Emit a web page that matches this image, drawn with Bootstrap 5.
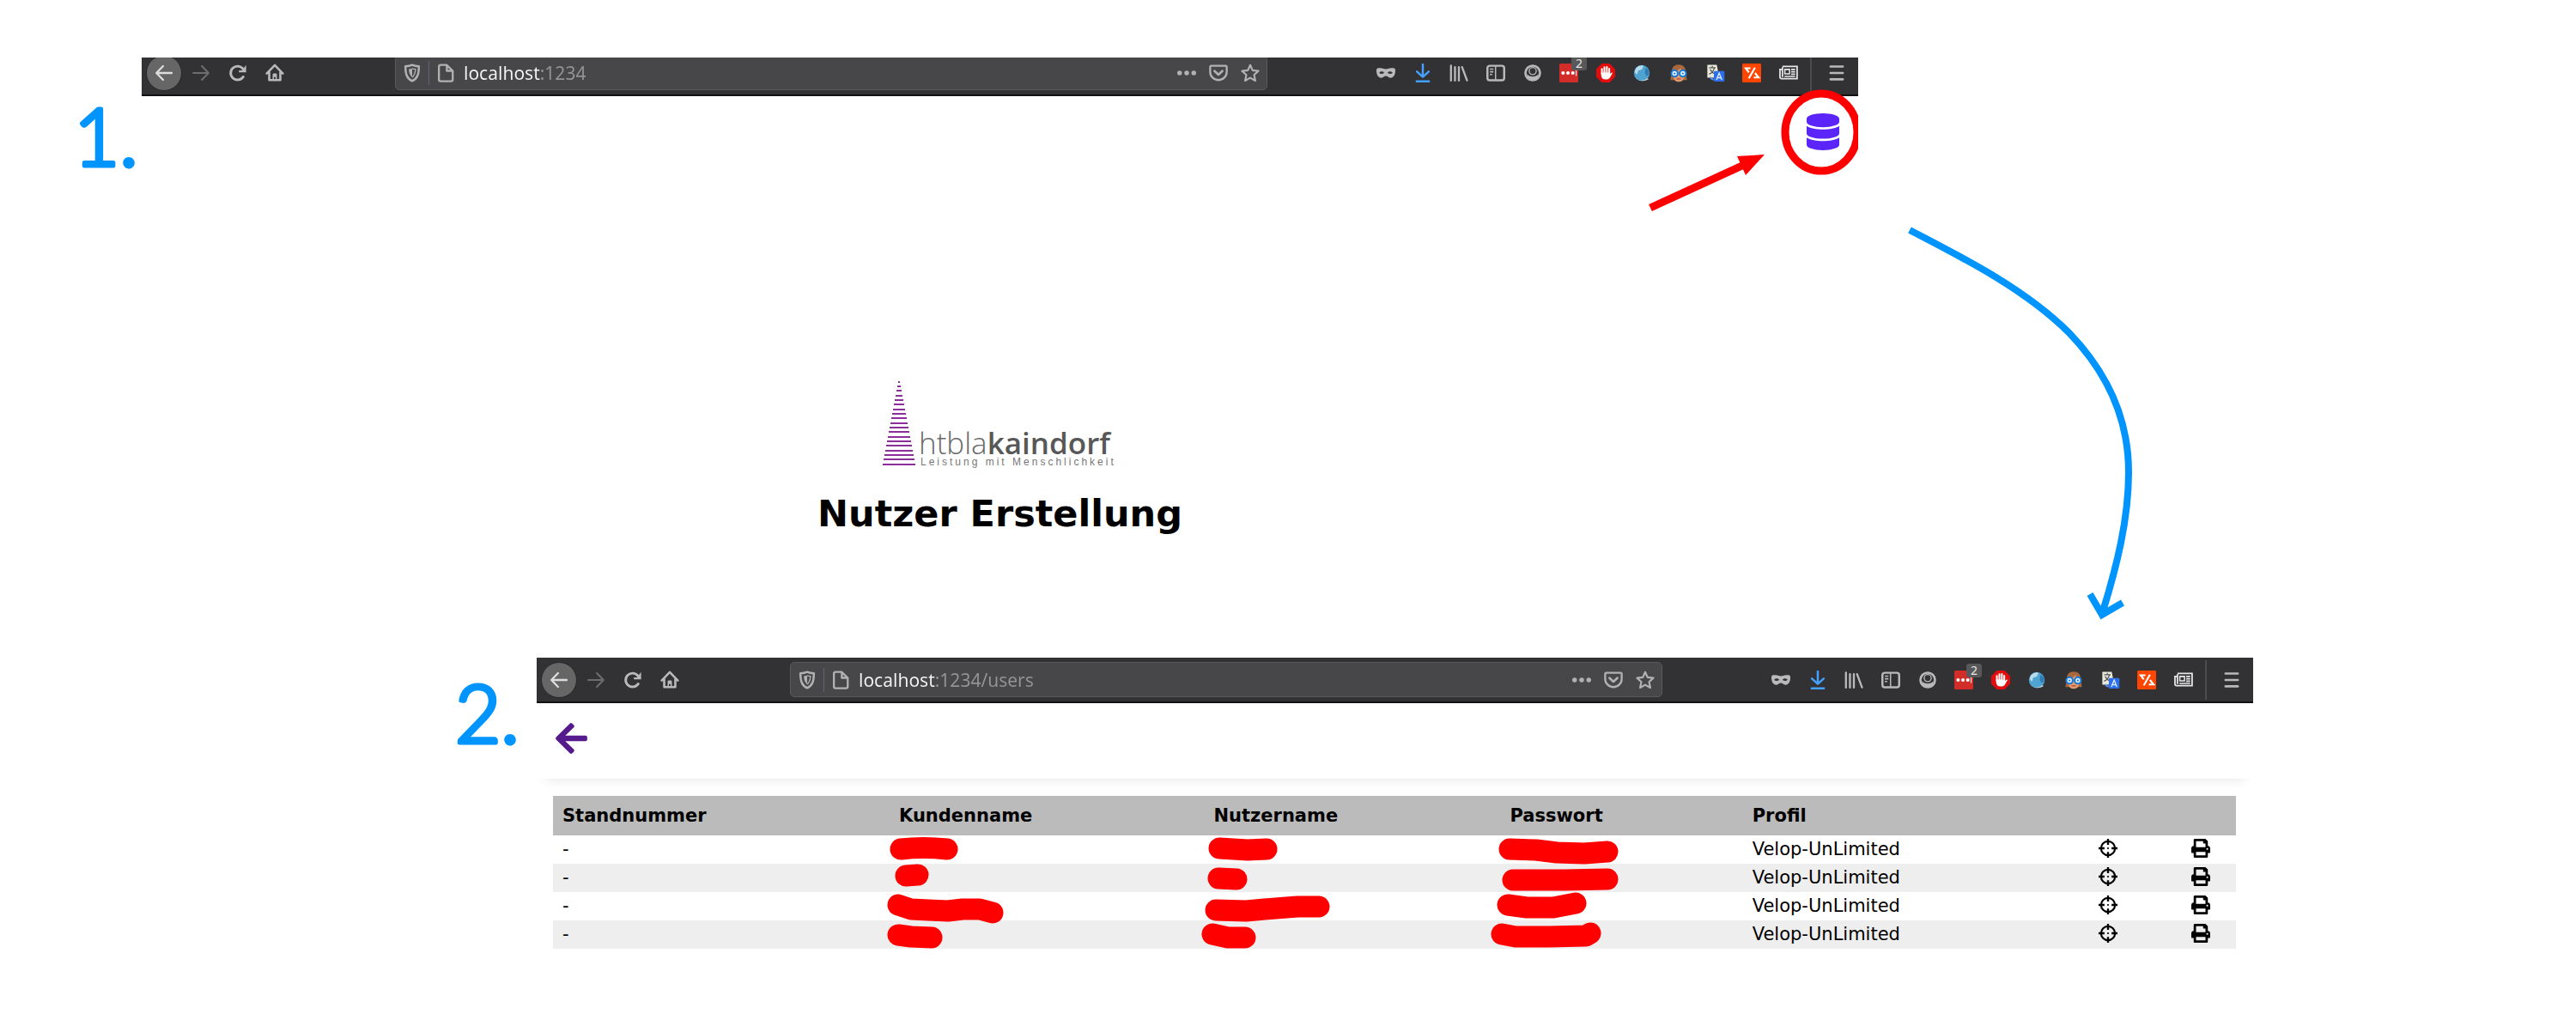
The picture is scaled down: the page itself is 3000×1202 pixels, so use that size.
<!DOCTYPE html>
<html lang="de">
<head>
<meta charset="utf-8">
<meta name="viewport" content="width=device-width, initial-scale=1">
<title>Nutzer Erstellung</title>
<link href="https://cdn.jsdelivr.net/npm/bootstrap@5.3.0/dist/css/bootstrap.min.css" rel="stylesheet">
<style>
  body { background: #fff; color: #000; font-family: "DejaVu Sans", sans-serif; font-size: 21px; line-height: 25px; }
  svg { display: block; }
  .step-one { padding: 67px 836px 0 92px; }
  .step-two { padding: 143px 376px 0 528px; }
  .step-no { flex: 0 0 73px; }
  .step-two .step-no { flex-basis: 97px; }
  .step-no text { font-family: Lato, "DejaVu Sans", sans-serif; font-weight: 300; font-size: 92px; fill: #0094ff; stroke: #0094ff; stroke-width: 5px; stroke-linejoin: round; }
  .win { min-width: 0; }
  .win-cut .toolbar { margin-top: -8px; }
  .toolbar { height: 53px; background: #323234; border-bottom: 2px solid #111113; padding: 0 14px 0 5px; color: #b9b9ba; }
  .tool-btn { width: 42px; height: 42px; padding: 0; border: 0; background: none; color: inherit; display: flex; align-items: center; justify-content: center; border-radius: 50%; }
  .tool-btn.back-btn { background: #666; border: 1px solid #28282a; color: #dcdcdc; }
  .tool-btn.dim { color: #6d6d6f; }
  .nav-tools { gap: 1px; }
  .ico { width: 22px; height: 22px; }
  .urlbar { height: 41px; margin: 0 127px 0 119px; padding: 0 8px; background: #474749; border: 1px solid #59595c; border-radius: 5px; color: #b1b1b3; }
  .url-sep { width: 1px; height: 28px; background: #5f6670; margin: 0 8px; }
  .url-field { min-width: 0; margin-left: 10px; padding: 0; border: 0; outline: 0; font: 21px/30px "Noto Sans", sans-serif; color: transparent; background: linear-gradient(90deg, #f4f4f5 89px, #949496 89px); -webkit-background-clip: text; background-clip: text; }
  .url-tools { gap: 15px; }
  .ext-tools { width: 491px; flex: none; }
  .plain-btn { padding: 0; border: 0; background: none; color: inherit; position: relative; }
  .ext-count { position: absolute; left: 14px; top: -8px; width: 18px; height: 16px; background: #58585a; border-radius: 3px; color: #e8e8e8; font: 14px/16px "Noto Sans", sans-serif; }
  .bar-sep { width: 2px; height: 46px; background: #4c4c4e; margin: 0 18px 0 14px; }
  .page-top { padding: 20px 22px 0; }
  .ring { right: -7px; top: -9px; pointer-events: none; }
  .hint { right: 104px; top: 63px; }
  .hero { padding-top: 265px; }
  .hero h1 { font-size: 43px; line-height: 50px; font-weight: 700; margin: 28px 0 0; }
  .brand-name { font: 300 35px "Open Sans", sans-serif; fill: #6a6a6a; }
  .brand-name .strong { font-weight: 600; fill: #585858; }
  .brand-tag { font: 12px "Liberation Sans", sans-serif; letter-spacing: 3px; fill: #777; }
  .flow-arrow { left: 2200px; top: 255px; pointer-events: none; }
  .back-head { padding: 20px 22px 26px; box-shadow: 0 12px 12px -10px rgba(0,0,0,.09); }
  .list-wrap { padding: 20px 20px 0 19px; }
  .users { table-layout: fixed; width: 100%; }
  .users th { height: 46px; padding: 0 11px; background: #bbb; border: 0; font-weight: 700; vertical-align: middle; }
  .users td { height: 33px; padding: 0 11px; position: relative; vertical-align: middle; }
  .users tbody tr:nth-child(even) td { background: #eee; }
  .users td .plain-btn { display: block; color: #000; margin-bottom: 4px; }
  .redact { position: absolute; left: 0; top: 0; width: 140px; height: 33px; overflow: visible; z-index: 1; fill: none; stroke: #f00; stroke-width: 25px; stroke-linecap: round; stroke-linejoin: round; }
</style>
<script src="https://cdn.jsdelivr.net/npm/bootstrap@5.3.0/dist/js/bootstrap.bundle.min.js"></script>
</head>
<body class="position-relative">

<svg width="0" height="0" class="position-absolute" aria-hidden="true">
  <defs>
    <symbol id="i-back" viewBox="0 0 16 16"><path d="M14.5 8H2M7.2 2.2L1.6 8l5.6 5.8" fill="none" stroke="currentColor" stroke-width="1.7" stroke-linecap="round" stroke-linejoin="round"/></symbol>
    <symbol id="i-fwd" viewBox="0 0 16 16"><path d="M1.5 8H14M8.8 2.2L14.4 8l-5.6 5.8" fill="none" stroke="currentColor" stroke-width="1.5" stroke-linecap="round" stroke-linejoin="round"/></symbol>
    <symbol id="i-reload" viewBox="0 0 16 16"><path d="M12.6 11.2A5.8 5.8 0 1 1 12.4 4.6" fill="none" stroke="currentColor" stroke-width="2.1" stroke-linecap="round"/><path d="M15 1.3v6.2H8.9V5.8h2.6z" fill="currentColor"/></symbol>
    <symbol id="i-home" viewBox="0 0 16 16"><path d="M1.2 8.4L8 1.3l6.8 7.1M3.3 7.4V14h9.4V7.4" fill="none" stroke="currentColor" stroke-width="1.9" stroke-linecap="round" stroke-linejoin="round"/><path d="M6.2 14V9.2q0-.9.9-.9h1.8q.9 0 .9.9V14H8.7v-2.6H7.3V14z" fill="currentColor"/></symbol>
    <symbol id="i-shield" viewBox="0 0 16 16"><path d="M8 1.2C6 2 4.200 2.300 2.300 2.400c0 6 .900 10 5.700 12.400 4.800-2.400 5.700-6.400 5.700-12.400C11.800 2.300 10 2 8 1.200z" fill="none" stroke="currentColor" stroke-width="1.8" stroke-linejoin="round"/><path d="M8 4.200v7.500C6 10 5.300 7.800 5.200 4.800z" fill="currentColor"/><path d="M8 4.200c1 .4 1.800.5 2.800.6C10.700 7.800 10 10 8 11.700" fill="none" stroke="currentColor"/></symbol>
    <symbol id="i-doc" viewBox="0 0 16 16"><path d="M3.800 1.200h5L14 6.200v7.300q0 1.500-1.500 1.500H3.800q-1.500 0-1.500-1.500V2.700q0-1.500 1.500-1.500zM9 1.500v4.700h4.800" fill="none" stroke="currentColor" stroke-width="1.700" stroke-linejoin="round"/></symbol>
    <symbol id="i-dots" viewBox="0 0 16 16"><g fill="currentColor"><circle cx="2" cy="8" r="2"/><circle cx="8" cy="8" r="2"/><circle cx="14" cy="8" r="2"/></g></symbol>
    <symbol id="i-pocket" viewBox="0 0 16 16"><path d="M2 1.900h12q1 0 1 1V7a7 7 0 0 1-14 0V2.900q0-1 1-1z" fill="none" stroke="currentColor" stroke-width="1.700"/><path d="M4.700 6.300L8 9.400l3.300-3.100" fill="none" stroke="currentColor" stroke-width="2" stroke-linecap="round" stroke-linejoin="round"/></symbol>
    <symbol id="i-star" viewBox="0 0 16 16"><path d="M8 1.300l2 4.400 4.900.600-3.600 3.300 1 4.900L8 12.100l-4.300 2.400 1-4.900L1.100 6.300 6 5.700z" fill="none" stroke="currentColor" stroke-width="1.600" stroke-linejoin="round"/></symbol>
    <symbol id="i-mask" viewBox="0 0 16 16"><path fill="currentColor" fill-rule="evenodd" d="M0 5.200C.2 3.900 1.700 3.800 3.500 3.900 5.500 4 6.500 4.800 8 4.800s2.500-.8 4.500-.9c1.800-.1 3.300 0 3.500 1.300.200 3.800-1.200 6.900-4 6.900-1.900 0-2.600-1.600-4-1.600s-2.100 1.600-4 1.600c-2.800 0-4.200-3.100-4-6.900zM2.300 7.800C3 8.900 6 9 6.600 7.900 6 6.300 3.200 6.200 2.300 7.800zm7.100.1c.6 1.100 3.600 1 4.300-.1-.9-1.600-3.700-1.500-4.300.1z"/></symbol>
    <symbol id="i-down" viewBox="0 0 16 16"><path d="M8 .700v10.500M3 6.800L8 11.400l5-4.600M2.800 15.100h10.400" fill="none" stroke="#45a1ff" stroke-width="1.800" stroke-linecap="round" stroke-linejoin="round"/></symbol>
    <symbol id="i-lib" viewBox="0 0 16 16"><path d="M1.300 1.800v12.600M4.700 3v11.400M8 3v11.400M10.700 3l4.200 11.300" fill="none" stroke="currentColor" stroke-width="1.700" stroke-linecap="round"/></symbol>
    <symbol id="i-side" viewBox="0 0 16 16"><rect x=".9" y="1.900" width="14.200" height="12.300" rx="2" fill="none" stroke="currentColor" stroke-width="1.800"/><path d="M7.800 2v12M3 4.800h3M3 7h3M3 9.200h2" stroke="currentColor" stroke-width="1.100"/></symbol>
    <symbol id="i-user" viewBox="0 0 16 16"><circle cx="8" cy="8" r="6.200" fill="none" stroke="currentColor" stroke-width="1.900"/><circle cx="8" cy="6.600" r="3.200" fill="#323234"/><path d="M3.200 8.500q1 2 2.800 2.300 2 .6 4 0 1.800-.3 2.800-2.300Q13 13.800 8 14T3.200 8.500z" fill="currentColor"/><circle cx="8" cy="6.400" r="3" fill="none" stroke="currentColor" stroke-width="1"/></symbol>
    <symbol id="i-pass" viewBox="0 0 16 16"><rect width="16" height="16" rx="1" fill="#d32d2a"/><g fill="#fff"><circle cx="3.200" cy="8" r="1.500"/><circle cx="7.300" cy="8" r="1.500"/><circle cx="11.400" cy="8" r="1.500"/><path d="M13.800 5.600h.8v4.900h-.8z"/></g></symbol>
    <symbol id="i-hand" viewBox="0 0 16 16"><path d="M4.700 0h6.600L16 4.700v6.600L11.300 16H4.700L0 11.300V4.700z" fill="#e40d0d"/><path d="M4.800 8.500V4.600M6.900 8V3.100M9 8V2.900M11 8.500V4.300" stroke="#fff" stroke-width="1.500" stroke-linecap="round"/><path d="M4.100 7.600h7.600v1.300l1-1.100q1-.5 1 .3l-2.400 4.200Q10 13.600 8 13.500q-3.900 0-3.900-4z" fill="#fff"/></symbol>
    <symbol id="i-globe" viewBox="0 0 16 16"><circle cx="8" cy="8" r="6.700" fill="#4fa3d1"/><path d="M3 4Q6 .9 9.500 2L8 5 5 6 4 9.500 2 7z" fill="#b9dcec"/><path d="M11.500 3.200q3 2.300 2.500 6l-2 1.500-1.500-3z" fill="#2f7cb4"/><path d="M2.500 12q5 4.500 10.500.3l.8.900q-6 3.600-11.300-1.200z" fill="#cfd6da"/></symbol>
    <symbol id="i-face" viewBox="0 0 16 16"><path d="M8 .900q6 0 6 6.500l1 6.600H1l1-6.600Q2 .9 8 .900z" fill="#a9683c"/><path d="M3.500 7q4-.5 6-3 1 2 3.500 3v3.500Q12 15.500 8 15.500T3.300 10.500z" fill="#e39a6c"/><g fill="#e8f2ff" stroke="#1778d6" stroke-width="1.500"><circle cx="4.500" cy="8.400" r="2.700"/><circle cx="11.500" cy="8.400" r="2.700"/></g><circle cx="4.500" cy="8.400" r=".8" fill="#1778d6"/><circle cx="11.500" cy="8.400" r=".8" fill="#1778d6"/><path d="M6.200 13h3.600" stroke="#b4503c"/></symbol>
    <symbol id="i-trans" viewBox="0 0 16 16"><path d="M1 1h8l2 11H1z" fill="#e9e9dc"/><path d="M2.500 3.500h5.500M5.200 2v1.500M7 3.500Q6 7.500 2.500 9M3.300 5Q5 8 8 9.200" fill="none" stroke="#555" stroke-width=".9"/><path d="M3.500 11.500q.5 2 3 2" fill="none" stroke="#5c8de8" stroke-width="1.200"/><rect x="6.500" y="6.300" width="9" height="9" rx=".8" fill="#2b6fea"/><path d="M8.700 13.800L11 8l2.300 5.800M9.500 12h3" fill="none" stroke="#dce9ff" stroke-width="1"/></symbol>
    <symbol id="i-code" viewBox="0 0 16 16"><rect width="16" height="16" rx="1" fill="#ff4500"/><path d="M7 4H3l2.600 3.500M10.800 3.500L5.600 12.500M10.800 8l3 3.800h-4" fill="none" stroke="#fff" stroke-width="1.600"/></symbol>
    <symbol id="i-news" viewBox="0 0 16 16"><path d="M2.800 2.500h12.400v10.300H2Q.7 12.800.7 11.500V5h2M2.800 3v8.500" fill="none" stroke="#e6e6e6" stroke-width="1.300"/><path d="M4.800 5h4v3.700h-4zM10.200 5h3.400M10.200 7h3.400M10.200 9h3.400M4.500 10.900h9.100" fill="none" stroke="#e6e6e6" stroke-width="1.100"/></symbol>
    <symbol id="i-menu" viewBox="0 0 16 16"><path d="M2.800 2.500h10.400M2.800 8h10.400M2.800 13.400h10.400" stroke="currentColor" stroke-width="1.900" stroke-linecap="round"/></symbol>
    <symbol id="i-cross" viewBox="0 0 16 16"><circle cx="8" cy="8" r="5.900" fill="none" stroke="currentColor" stroke-width="1.600"/><path d="M8 0v5M8 11v5M0 8h5M11 8h5" stroke="currentColor" stroke-width="1.700"/><circle cx="8" cy="8" r=".8" fill="currentColor"/></symbol>
    <symbol id="i-print" viewBox="0 0 512 512"><path fill="currentColor" d="M448 192V77.250c0-8.490-3.370-16.620-9.370-22.630L393.370 9.370c-6-6-14.140-9.370-22.630-9.370H96C78.330 0 64 14.330 64 32v160c-35.350 0-64 28.650-64 64v112c0 8.840 7.160 16 16 16h48v96c0 17.670 14.330 32 32 32h320c17.670 0 32-14.330 32-32v-96h48c8.840 0 16-7.160 16-16V256c0-35.350-28.650-64-64-64zm-64 256H128v-96h256v96zm0-224H128V64h192v48c0 8.840 7.160 16 16 16h48v96zm48 72c-13.250 0-24-10.750-24-24 0-13.260 10.750-24 24-24s24 10.740 24 24c0 13.250-10.750 24-24 24z"/></symbol>
  </defs>
</svg>

<section class="step-one d-flex">
  <div class="step-no">
    <svg width="73" height="150" role="img" aria-label="Schritt 1"><text x="-6" y="126">1.</text></svg>
  </div>
  <div class="win win-cut flex-grow-1 position-relative overflow-hidden">
    <div class="toolbar d-flex align-items-center">
      <div class="nav-tools d-flex">
        <button type="button" class="tool-btn back-btn" aria-label="Zurück"><svg class="ico"><use href="#i-back"/></svg></button>
        <button type="button" class="tool-btn dim" aria-label="Vor"><svg class="ico"><use href="#i-fwd"/></svg></button>
        <button type="button" class="tool-btn" aria-label="Neu laden"><svg class="ico"><use href="#i-reload"/></svg></button>
        <button type="button" class="tool-btn" aria-label="Startseite"><svg class="ico"><use href="#i-home"/></svg></button>
      </div>
      <div class="urlbar d-flex align-items-center flex-grow-1">
        <svg class="ico"><use href="#i-shield"/></svg>
        <span class="url-sep"></span>
        <svg class="ico"><use href="#i-doc"/></svg>
        <input class="url-field flex-grow-1" type="text" aria-label="Adresse" value="localhost:1234">
        <div class="url-tools d-flex">
          <button type="button" class="plain-btn" aria-label="Aktionen"><svg class="ico"><use href="#i-dots"/></svg></button>
          <button type="button" class="plain-btn" aria-label="Pocket"><svg class="ico"><use href="#i-pocket"/></svg></button>
          <button type="button" class="plain-btn" aria-label="Lesezeichen"><svg class="ico"><use href="#i-star"/></svg></button>
        </div>
      </div>
      <div class="ext-tools d-flex justify-content-between">
        <button type="button" class="plain-btn" aria-label="Maske"><svg class="ico"><use href="#i-mask"/></svg></button>
        <button type="button" class="plain-btn" aria-label="Downloads"><svg class="ico"><use href="#i-down"/></svg></button>
        <button type="button" class="plain-btn" aria-label="Bibliothek"><svg class="ico"><use href="#i-lib"/></svg></button>
        <button type="button" class="plain-btn" aria-label="Seitenleiste"><svg class="ico"><use href="#i-side"/></svg></button>
        <button type="button" class="plain-btn" aria-label="Konto"><svg class="ico"><use href="#i-user"/></svg></button>
        <button type="button" class="plain-btn" aria-label="Passwörter"><svg class="ico"><use href="#i-pass"/></svg><span class="ext-count">2</span></button>
        <button type="button" class="plain-btn" aria-label="Blocker"><svg class="ico"><use href="#i-hand"/></svg></button>
        <button type="button" class="plain-btn" aria-label="Globus"><svg class="ico"><use href="#i-globe"/></svg></button>
        <button type="button" class="plain-btn" aria-label="Profilbild"><svg class="ico"><use href="#i-face"/></svg></button>
        <button type="button" class="plain-btn" aria-label="Übersetzer"><svg class="ico"><use href="#i-trans"/></svg></button>
        <button type="button" class="plain-btn" aria-label="Code"><svg class="ico"><use href="#i-code"/></svg></button>
        <button type="button" class="plain-btn" aria-label="Nachrichten"><svg class="ico"><use href="#i-news"/></svg></button>
      </div>
      <span class="bar-sep"></span>
      <button type="button" class="plain-btn" aria-label="Menü"><svg class="ico"><use href="#i-menu"/></svg></button>
    </div>
    <div class="position-relative">
      <div class="page-top d-flex justify-content-end">
        <a href="#users" aria-label="Nutzerliste"><svg width="38" height="43" viewBox="0 0 448 512" preserveAspectRatio="none"><path fill="#5b25f9" d="M448 73.143v45.714C448 159.143 347.667 192 224 192S0 159.143 0 118.857V73.143C0 32.857 100.333 0 224 0s224 32.857 224 73.143zM448 176v102.857C448 319.143 347.667 352 224 352S0 319.143 0 278.857V176c48.125 33.143 136.208 48.572 224 48.572S399.874 209.143 448 176zm0 160v102.857C448 479.143 347.667 512 224 512S0 479.143 0 438.857V336c48.125 33.143 136.208 48.572 224 48.572S399.874 369.143 448 336z"/></svg></a>
      </div>
      <svg class="ring position-absolute" width="100" height="102"><ellipse cx="50" cy="51" rx="42" ry="45" fill="none" stroke="#f00" stroke-width="9"/></svg>
      <svg class="hint position-absolute" width="145" height="76"><path d="M7 67L116 17" stroke="#f00" stroke-width="9"/><path d="M140 5L108 7l5 11 5 11z" fill="#f00"/></svg>
      <main class="hero d-flex flex-column align-items-center">
        <svg width="274" height="105" role="img" aria-label="htbla kaindorf">
          <path fill="none" stroke="#8d2f9a" stroke-width="2" d="M18 5h2M17 10h4M16 15h6M15 21h8M14 26h10M13 31h12M12 37h14M11 42h16M10 47h18M9 53h20M8 58h22M7 63h24M6 69h26M5 74h28M4 79h30M3 85h32M2 90h34M1 95h36M0 101h38"/>
          <text class="brand-name" x="42" y="89">htbla<tspan class="strong">kaindorf</tspan></text>
          <text class="brand-tag" x="44" y="102">Leistung mit Menschlichkeit</text>
        </svg>
        <h1>Nutzer Erstellung</h1>
      </main>
    </div>
  </div>
</section>

<svg class="flow-arrow position-absolute" width="300" height="480"><path d="M24 13C90 47 160 83 210 133C258 183 279 237 279 295C279 350 265 405 249 457M234 437l14 24 24-14" fill="none" stroke="#0094ff" stroke-width="8"/></svg>

<section class="step-two d-flex" id="users">
  <div class="step-no">
    <svg width="97" height="120" role="img" aria-label="Schritt 2"><text x="2" y="99">2.</text></svg>
  </div>
  <div class="win flex-grow-1">
    <div class="toolbar d-flex align-items-center">
      <div class="nav-tools d-flex">
        <button type="button" class="tool-btn back-btn" aria-label="Zurück"><svg class="ico"><use href="#i-back"/></svg></button>
        <button type="button" class="tool-btn dim" aria-label="Vor"><svg class="ico"><use href="#i-fwd"/></svg></button>
        <button type="button" class="tool-btn" aria-label="Neu laden"><svg class="ico"><use href="#i-reload"/></svg></button>
        <button type="button" class="tool-btn" aria-label="Startseite"><svg class="ico"><use href="#i-home"/></svg></button>
      </div>
      <div class="urlbar d-flex align-items-center flex-grow-1">
        <svg class="ico"><use href="#i-shield"/></svg>
        <span class="url-sep"></span>
        <svg class="ico"><use href="#i-doc"/></svg>
        <input class="url-field flex-grow-1" type="text" aria-label="Adresse" value="localhost:1234/users">
        <div class="url-tools d-flex">
          <button type="button" class="plain-btn" aria-label="Aktionen"><svg class="ico"><use href="#i-dots"/></svg></button>
          <button type="button" class="plain-btn" aria-label="Pocket"><svg class="ico"><use href="#i-pocket"/></svg></button>
          <button type="button" class="plain-btn" aria-label="Lesezeichen"><svg class="ico"><use href="#i-star"/></svg></button>
        </div>
      </div>
      <div class="ext-tools d-flex justify-content-between">
        <button type="button" class="plain-btn" aria-label="Maske"><svg class="ico"><use href="#i-mask"/></svg></button>
        <button type="button" class="plain-btn" aria-label="Downloads"><svg class="ico"><use href="#i-down"/></svg></button>
        <button type="button" class="plain-btn" aria-label="Bibliothek"><svg class="ico"><use href="#i-lib"/></svg></button>
        <button type="button" class="plain-btn" aria-label="Seitenleiste"><svg class="ico"><use href="#i-side"/></svg></button>
        <button type="button" class="plain-btn" aria-label="Konto"><svg class="ico"><use href="#i-user"/></svg></button>
        <button type="button" class="plain-btn" aria-label="Passwörter"><svg class="ico"><use href="#i-pass"/></svg><span class="ext-count">2</span></button>
        <button type="button" class="plain-btn" aria-label="Blocker"><svg class="ico"><use href="#i-hand"/></svg></button>
        <button type="button" class="plain-btn" aria-label="Globus"><svg class="ico"><use href="#i-globe"/></svg></button>
        <button type="button" class="plain-btn" aria-label="Profilbild"><svg class="ico"><use href="#i-face"/></svg></button>
        <button type="button" class="plain-btn" aria-label="Übersetzer"><svg class="ico"><use href="#i-trans"/></svg></button>
        <button type="button" class="plain-btn" aria-label="Code"><svg class="ico"><use href="#i-code"/></svg></button>
        <button type="button" class="plain-btn" aria-label="Nachrichten"><svg class="ico"><use href="#i-news"/></svg></button>
      </div>
      <span class="bar-sep"></span>
      <button type="button" class="plain-btn" aria-label="Menü"><svg class="ico"><use href="#i-menu"/></svg></button>
    </div>
    <header class="back-head d-flex">
      <a href="#" aria-label="Zurück zur Erstellung"><svg width="37" height="42" viewBox="0 0 448 512"><path fill="#551a8b" d="M257.500 445.100l-22.200 22.200c-9.400 9.400-24.600 9.400-33.900 0L7 273c-9.400-9.400-9.400-24.600 0-33.900L201.400 44.700c9.400-9.400 24.600-9.400 33.900 0l22.200 22.200c9.500 9.500 9.300 25-.4 34.300L136.600 216H424c13.300 0 24 10.700 24 24v32c0 13.300-10.700 24-24 24H136.600l120.500 114.800c9.800 9.300 10 24.800.4 34.300z"/></svg></a>
    </header>
    <div class="list-wrap">
      <table class="users">
        <colgroup><col style="width:20%"><col style="width:18.7%"><col style="width:17.6%"><col style="width:14.4%"><col style="width:20.6%"><col style="width:5.5%"><col style="width:3.2%"></colgroup>
        <thead>
          <tr><th scope="col">Standnummer</th><th scope="col">Kundenname</th><th scope="col">Nutzername</th><th scope="col">Passwort</th><th scope="col">Profil</th><th></th><th></th></tr>
        </thead>
        <tbody>
          <tr>
            <td>-</td>
            <td><svg class="redact"><path d="M13 16Q39 13 67 16"/></svg></td>
            <td><svg class="redact"><path d="M17 15L50 17L72 16"/></svg></td>
            <td><svg class="redact"><path d="M11 16L42 17L66 20L98 21L125 19"/></svg></td>
            <td>Velop-UnLimited</td>
            <td><button type="button" class="plain-btn" aria-label="Anzeigen"><svg class="ico"><use href="#i-cross"/></svg></button></td>
            <td><button type="button" class="plain-btn" aria-label="Drucken"><svg class="ico"><use href="#i-print"/></svg></button></td>
          </tr>
          <tr>
            <td>-</td>
            <td><svg class="redact"><path d="M19 14L33 13"/></svg></td>
            <td><svg class="redact"><path d="M16 17L37 18"/></svg></td>
            <td><svg class="redact"><path d="M15 19H75L125 18"/></svg></td>
            <td>Velop-UnLimited</td>
            <td><button type="button" class="plain-btn" aria-label="Anzeigen"><svg class="ico"><use href="#i-cross"/></svg></button></td>
            <td><button type="button" class="plain-btn" aria-label="Drucken"><svg class="ico"><use href="#i-print"/></svg></button></td>
          </tr>
          <tr>
            <td>-</td>
            <td><svg class="redact"><path d="M10 15L25 20L45 21L68 22L85 20L105 20L120 24"/></svg></td>
            <td><svg class="redact"><path d="M13 21L48 22L70 20L108 17L133 17"/></svg></td>
            <td><svg class="redact"><path d="M9 15L31 18H62L88 13"/></svg></td>
            <td>Velop-UnLimited</td>
            <td><button type="button" class="plain-btn" aria-label="Anzeigen"><svg class="ico"><use href="#i-cross"/></svg></button></td>
            <td><button type="button" class="plain-btn" aria-label="Drucken"><svg class="ico"><use href="#i-print"/></svg></button></td>
          </tr>
          <tr>
            <td>-</td>
            <td><svg class="redact"><path d="M10 17L25 19L49 20"/></svg></td>
            <td><svg class="redact"><path d="M9 16L27 20H47"/></svg></td>
            <td><svg class="redact"><path d="M2 16L18 19H58L100 18L105 15"/></svg></td>
            <td>Velop-UnLimited</td>
            <td><button type="button" class="plain-btn" aria-label="Anzeigen"><svg class="ico"><use href="#i-cross"/></svg></button></td>
            <td><button type="button" class="plain-btn" aria-label="Drucken"><svg class="ico"><use href="#i-print"/></svg></button></td>
          </tr>
        </tbody>
      </table>
    </div>
  </div>
</section>
</body>
</html>
